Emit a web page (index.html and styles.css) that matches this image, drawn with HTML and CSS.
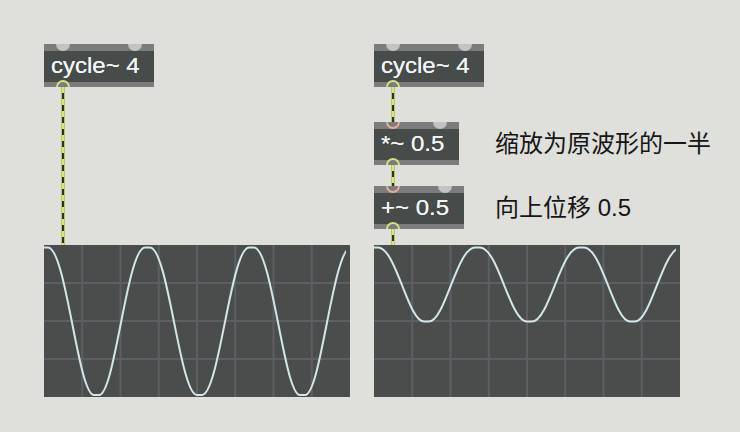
FILE: index.html
```html
<!DOCTYPE html>
<html lang="zh-CN">
<head>
<meta charset="utf-8">
<title>cycle~ scope</title>
<link rel="stylesheet" href="styles.css">
</head>
<body>
<div class="patch">
  <div class="col">
    <div class="obj w-cycle">
      <span class="port inlet in-l"></span><span class="port inlet in-r"></span>
      <div class="bar"></div>
      <div class="label"><span class="txt">cycle~ 4</span></div>
      <div class="bar"></div>
      <span class="port outlet"></span>
    </div>
    <div class="cable c-long"></div>
    <svg class="scope" width="306" height="152" viewBox="0 0 306 152">
      <defs><clipPath id="clipA"><rect x="0" y="0" width="302" height="152"/></clipPath></defs>
      <rect class="scope-bg" x="0" y="0" width="306" height="152"/>
      <g class="grid">
        <line x1="38.25" y1="0" x2="38.25" y2="152"/><line x1="76.5" y1="0" x2="76.5" y2="152"/>
        <line x1="114.75" y1="0" x2="114.75" y2="152"/><line x1="153" y1="0" x2="153" y2="152"/>
        <line x1="191.25" y1="0" x2="191.25" y2="152"/><line x1="229.5" y1="0" x2="229.5" y2="152"/>
        <line x1="267.75" y1="0" x2="267.75" y2="152"/>
        <line x1="0" y1="38" x2="306" y2="38"/><line x1="0" y1="76" x2="306" y2="76"/>
        <line x1="0" y1="114" x2="306" y2="114"/>
      </g>
      <path class="wave" clip-path="url(#clipA)" d="M0 2.5 L4 2.5 C22 2.5 34 150 50 150 L55 150 C71 150 83 2.5 101 2.5 L106 2.5 C124 2.5 136 150 153 150 L158 150 C175 150 187 2.5 205 2.5 L210 2.5 C228 2.5 240 150 256 150 L261 150 C277 150 289 2.5 307 2.5"/>
    </svg>
  </div>

  <div class="col">
    <div class="obj w-cycle">
      <span class="port inlet in-l"></span><span class="port inlet in-r"></span>
      <div class="bar"></div>
      <div class="label"><span class="txt">cycle~ 4</span></div>
      <div class="bar"></div>
      <span class="port outlet"></span>
    </div>
    <div class="cable c1"></div>
    <div class="row">
      <div class="obj w-mul">
        <span class="port linked in-l"></span><span class="port inlet in-r"></span>
        <div class="bar"></div>
        <div class="label"><span class="txt">*~ 0.5</span></div>
        <div class="bar"></div>
        <span class="port outlet"></span>
      </div>
      <div class="comment">缩放为原波形的一半</div>
    </div>
    <div class="cable c2"></div>
    <div class="row">
      <div class="obj w-add">
        <span class="port linked in-l"></span><span class="port inlet in-r"></span>
        <div class="bar"></div>
        <div class="label"><span class="txt">+~ 0.5</span></div>
        <div class="bar"></div>
        <span class="port outlet"></span>
      </div>
      <div class="comment">向上位移 0.5</div>
    </div>
    <div class="cable c3"></div>
    <svg class="scope" width="306" height="152" viewBox="0 0 306 152">
      <defs><clipPath id="clipB"><rect x="0" y="0" width="302" height="152"/></clipPath></defs>
      <rect class="scope-bg" x="0" y="0" width="306" height="152"/>
      <g class="grid">
        <line x1="38.25" y1="0" x2="38.25" y2="152"/><line x1="76.5" y1="0" x2="76.5" y2="152"/>
        <line x1="114.75" y1="0" x2="114.75" y2="152"/><line x1="153" y1="0" x2="153" y2="152"/>
        <line x1="191.25" y1="0" x2="191.25" y2="152"/><line x1="229.5" y1="0" x2="229.5" y2="152"/>
        <line x1="267.75" y1="0" x2="267.75" y2="152"/>
        <line x1="0" y1="38" x2="306" y2="38"/><line x1="0" y1="76" x2="306" y2="76"/>
        <line x1="0" y1="114" x2="306" y2="114"/>
      </g>
      <path class="wave" clip-path="url(#clipB)" d="M0 2.5 L4 2.5 C22 2.5 34 76.5 50 76.5 L55 76.5 C71 76.5 83 2.5 101 2.5 L106 2.5 C124 2.5 136 76.5 153 76.5 L158 76.5 C175 76.5 187 2.5 205 2.5 L210 2.5 C228 2.5 240 76.5 256 76.5 L261 76.5 C277 76.5 289 2.5 307 2.5"/>
    </svg>
  </div>
</div>
</body>
</html>
```

FILE: styles.css
```css
html, body {
  margin: 0;
  padding: 0;
}
body {
  width: 740px;
  height: 432px;
  background: #dfdfdb;
  overflow: hidden;
  font-family: "Liberation Sans", Arial, sans-serif;
}
.patch {
  display: flex;
  gap: 24px;
  padding: 44px 0 0 44px;
}
.col {
  display: flex;
  flex-direction: column;
  width: 306px;
}
.obj {
  position: relative;
  overflow: hidden;
  height: 43px;
  display: flex;
  flex-direction: column;
  background: #474b4a;
  flex: none;
}
.w-cycle { width: 110px; }
.w-mul { width: 85px; }
.w-add { width: 90px; }
.bar {
  height: 7px;
  background: #7b7c7c;
  flex: none;
}
.label {
  flex: 1;
  padding: 1px 0 0 7px;
  line-height: 28px;
  white-space: nowrap;
}
.txt {
  display: inline-block;
  font-size: 22px;
  color: #f2f5f6;
  transform: scaleX(1.09);
  transform-origin: left center;
  text-shadow: 0 0 0.4px #f2f5f6;
}
.port {
  position: absolute;
  width: 14px;
  height: 14px;
  border-radius: 50%;
  box-sizing: border-box;
}
.inlet {
  top: -7px;
  background: #c3c3c3;
}
.linked {
  top: -7px;
  border: 2px solid #e9a99d;
}
.in-l { left: 11.5px; }
.in-r { right: 12px; }
.outlet {
  bottom: -7px;
  left: 11.5px;
  border: 2px solid #d8de82;
}
.cable {
  width: 4px;
  margin-left: 17px;
  box-sizing: border-box;
  border-left: 1px solid #b6c46a;
  border-right: 1px solid #b6c46a;
  background: repeating-linear-gradient(to bottom, #d9e67f 0 6px, #2d2f2b 6px 12px);
  flex: none;
}
.c-long { height: 158px; }
.c1 { height: 35px; }
.c2 { height: 21px; }
.c3 { height: 16px; }
.row {
  display: grid;
  grid-template-columns: 121px auto;
  align-items: center;
}
.comment {
  font-family: "Liberation Sans", "Noto Sans CJK SC", sans-serif;
  font-size: 24px;
  color: #161616;
  white-space: nowrap;
  padding-bottom: 4px;
}
.scope {
  display: block;
  flex: none;
}
.scope-bg { fill: #4a4d4c; }
.grid line {
  stroke: #5e5f65;
  stroke-width: 2;
}
.wave {
  fill: none;
  stroke: #d3e7e8;
  stroke-width: 2;
  stroke-linejoin: round;
}
```
